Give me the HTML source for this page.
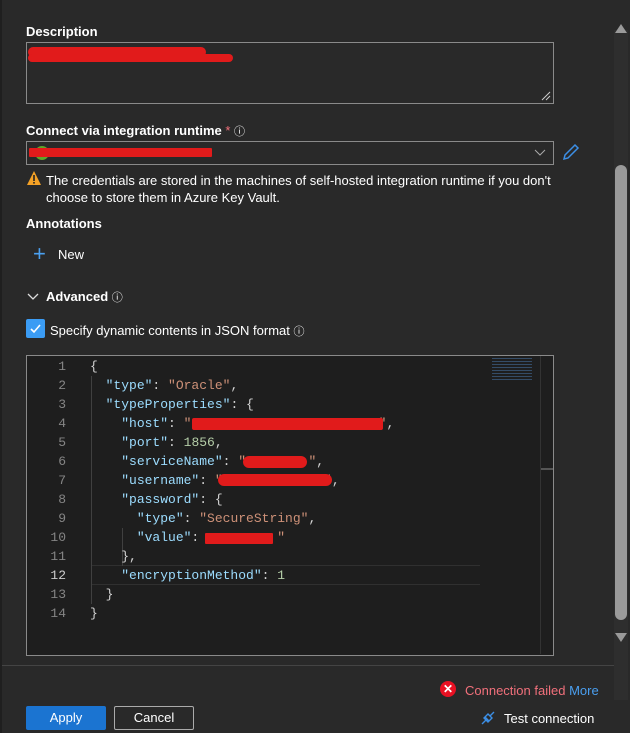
<!DOCTYPE html>
<html><head><style>
body{margin:0;width:630px;height:733px;background:#292929;font-family:"Liberation Sans",sans-serif;color:#fff;position:relative;overflow:hidden;font-size:13px}
.a{position:absolute}
.lbl{font-weight:bold;font-size:13px}
.red{background:#e11b1b;border-radius:6px;position:absolute}
.code{font-family:"Liberation Mono",monospace;font-size:13px;line-height:19px;white-space:pre}
.k{color:#9cdcfe}.s{color:#ce9178}.n{color:#b5cea8}.p{color:#d4d4d4}
.ln{color:#858585;text-align:right;width:40px}
</style></head><body>
<div class="a" style="left:0;top:0;width:2px;height:733px;background:#1f1f1f"></div>
<div class="a lbl" style="left:26px;top:24px">Description</div>
<div class="a" style="left:26px;top:42px;width:526px;height:60px;border:1px solid #8a8a8a"></div>
<div class="red" style="left:28px;top:47px;width:178px;height:10px"></div>
<div class="red" style="left:28px;top:54px;width:205px;height:8px"></div>
<svg class="a" style="left:541px;top:91px" width="10" height="10"><path d="M1 9L9 1M5 9L9 5" stroke="#ccc"/></svg>
<div class="a lbl" style="left:26px;top:123px">Connect via integration runtime <span style="color:#f1707b;font-weight:normal">*</span> <span style="font-weight:normal;font-size:11px">ⓘ</span></div>
<div class="a" style="left:26px;top:141px;width:526px;height:22px;border:1px solid #8a8a8a"></div>
<div class="a" style="left:35px;top:146px;width:14px;height:14px;border-radius:7px;background:#5ea62a"></div>
<div class="red" style="left:29px;top:148px;width:183px;height:9px;border-radius:1px"></div>
<svg class="a" style="left:534px;top:149px" width="12" height="8"><path d="M1 1L6 6L11 1" stroke="#aaa" fill="none"/></svg>
<svg class="a" style="left:562px;top:143px" width="18" height="18"><path d="M2 16L3 12L13 2L16 5L6 15Z" stroke="#3c8fe6" fill="none" stroke-width="1.5"/></svg>
<svg class="a" style="left:26px;top:170px" width="16" height="16"><path d="M8 1L15 15H1Z" fill="#f4a126"/><rect x="7.2" y="5" width="1.6" height="6" fill="#222"/><rect x="7.2" y="12" width="1.6" height="1.6" fill="#222"/></svg>
<div class="a" style="left:46px;top:172px;line-height:17px;font-size:13px">The credentials are stored in the machines of self-hosted integration runtime if you don't<br>choose to store them in Azure Key Vault.</div>
<div class="a lbl" style="left:26px;top:216px">Annotations</div>
<div class="a" style="left:33px;top:244px;color:#4aa0f0;font-size:22px;line-height:20px">+</div>
<div class="a" style="left:58px;top:247px">New</div>
<svg class="a" style="left:27px;top:292px" width="12" height="10"><path d="M1 2L6 7L11 2" stroke="#ddd" fill="none" stroke-width="1.3"/></svg>
<div class="a lbl" style="left:46px;top:289px">Advanced <span style="font-weight:normal;font-size:11px;vertical-align:top">ⓘ</span></div>
<div class="a" style="left:26px;top:319px;width:19px;height:19px;background:#3b9cf4;border-radius:2px"></div>
<svg class="a" style="left:29px;top:322px" width="13" height="13"><path d="M2 7L5 10L11 3" stroke="#fff" fill="none" stroke-width="1.6"/></svg>
<div class="a" style="left:50px;top:323px">Specify dynamic contents in JSON format <span style="font-size:11px">ⓘ</span></div>
<div class="a" style="left:26px;top:355px;width:526px;height:299px;border:1px solid #8a8a8a;background:#1e1e1e"></div>
<div class="a" style="left:540px;top:356px;width:1px;height:298px;background:#333"></div>
<div class="a" style="left:541px;top:468px;width:12px;height:2px;background:#555"></div>
<div class="a" style="left:92px;top:565px;width:388px;height:18px;border-top:1px solid #303030;border-bottom:1px solid #303030"></div>
<div class="a" style="left:91px;top:376px;width:1px;height:228px;background:#404040"></div>
<div class="a" style="left:122px;top:528px;width:1px;height:38px;background:#404040"></div>
<div class="a" style="left:492px;top:358px;width:40px;height:22px;opacity:.5;background:repeating-linear-gradient(#4a7ab0 0 1px,transparent 1px 3px)"></div>
<div class="a code ln" style="left:26px;top:357px">1
2
3
4
5
6
7
8
9
10
11
<span style="color:#ccc">12</span>
13
14</div>
<div class="a code" style="left:90px;top:357px"><span class="p">{</span>
  <span class="k">"type"</span><span class="p">: </span><span class="s">"Oracle"</span><span class="p">,</span>
  <span class="k">"typeProperties"</span><span class="p">: {</span>
    <span class="k">"host"</span><span class="p">: </span><span class="s">"                        "</span><span class="p">,</span>
    <span class="k">"port"</span><span class="p">: </span><span class="n">1856</span><span class="p">,</span>
    <span class="k">"serviceName"</span><span class="p">: </span><span class="s">"        "</span><span class="p">,</span>
    <span class="k">"username"</span><span class="p">: </span><span class="s">"             "</span><span class="p">,</span>
    <span class="k">"password"</span><span class="p">: {</span>
      <span class="k">"type"</span><span class="p">: </span><span class="s">"SecureString"</span><span class="p">,</span>
      <span class="k">"value"</span><span class="p">: </span><span class="s">         "</span>
    <span class="p">},</span>
    <span class="k">"encryptionMethod"</span><span class="p">: </span><span class="n">1</span>
  <span class="p">}</span>
<span class="p">}</span></div>
<div class="red" style="left:192px;top:418px;width:191px;height:12px;border-radius:2px"></div>
<div class="red" style="left:243px;top:456px;width:64px;height:12px"></div>
<div class="red" style="left:218px;top:474px;width:114px;height:12px"></div>
<div class="red" style="left:205px;top:533px;width:68px;height:11px;border-radius:1px"></div>
<div class="a" style="left:614px;top:30px;width:14px;height:670px;background:#2e2e2e"></div>
<svg class="a" style="left:614px;top:22px" width="14" height="12"><path d="M1 11L7 2L13 11Z" fill="#9a9a9a"/></svg>
<div class="a" style="left:615px;top:165px;width:12px;height:455px;background:#9a9a9a;border-radius:6px"></div>
<svg class="a" style="left:614px;top:632px" width="14" height="12"><path d="M1 1L7 10L13 1Z" fill="#9a9a9a"/></svg>
<div class="a" style="left:2px;top:665px;width:612px;height:1px;background:#444"></div>
<div class="a" style="left:440px;top:681px;width:16px;height:16px;border-radius:8px;background:#e81123;color:#fff;font-size:12px;font-weight:bold;text-align:center;line-height:16px">✕</div>
<div class="a" style="left:465px;top:683px;color:#f1707b">Connection failed <span style="color:#4a9ff0">More</span></div>
<div class="a" style="left:26px;top:706px;width:80px;height:24px;background:#1b74d1;border-radius:2px;text-align:center;line-height:24px">Apply</div>
<div class="a" style="left:114px;top:706px;width:78px;height:22px;border:1px solid #aaa;border-radius:2px;text-align:center;line-height:22px">Cancel</div>
<svg class="a" style="left:479px;top:709px" width="18" height="18"><path d="M3 15L7 11M11 7L15 3M6 8L10 12M5 9L9 5L13 9L9 13Z" stroke="#3c8fe6" fill="none" stroke-width="1.4"/></svg>
<div class="a" style="left:504px;top:711px">Test connection</div>
</body></html>
